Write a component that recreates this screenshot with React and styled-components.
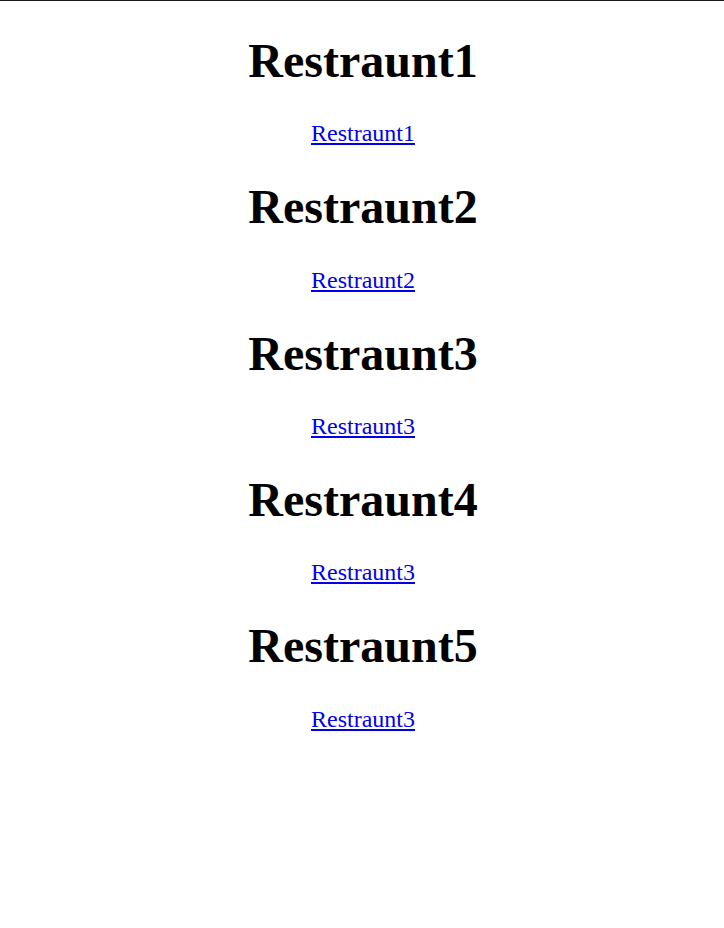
import React from 'react'
import styled, { createGlobalStyle } from 'styled-components'

const GlobalStyle = createGlobalStyle`
  body {
    margin: 0;
    font-family: "Liberation Serif", "Times New Roman", serif;
    background: #fff;
  }
`

const Page = styled.div`
  border-top: 1px solid #1a1a1a;
  padding: 0 11px 0 13px;
  text-align: center;
`

const Title = styled.h1`
  font-size: 48px;
  font-weight: bold;
  margin: 0.67em 0;
  line-height: normal;
`

const LinkRow = styled.p`
  font-size: 24px;
  margin: 1em 0;
`

const Link = styled.a`
  color: #0000ee;
  text-decoration: underline;
`

const restraunts = [
  { title: 'Restraunt1', link: 'Restraunt1' },
  { title: 'Restraunt2', link: 'Restraunt2' },
  { title: 'Restraunt3', link: 'Restraunt3' },
  { title: 'Restraunt4', link: 'Restraunt3' },
  { title: 'Restraunt5', link: 'Restraunt3' },
]

export default function App() {
  return (
    <>
      <GlobalStyle />
      <Page>
        {restraunts.map((r) => (
          <div key={r.title}>
            <Title>{r.title}</Title>
            <LinkRow>
              <Link href="#">{r.link}</Link>
            </LinkRow>
          </div>
        ))}
      </Page>
    </>
  )
}
